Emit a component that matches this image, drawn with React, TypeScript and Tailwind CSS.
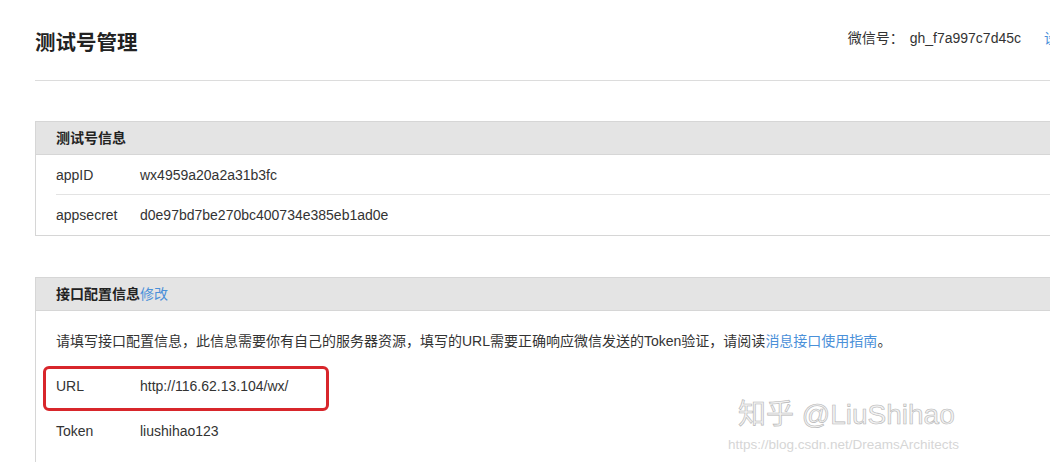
import React from "react";

const font = { fontFamily: '"Liberation Sans", "Noto Sans CJK SC", sans-serif' };

function Row({ label, value, divider }: { label: string; value: string; divider?: boolean }) {
  return (
    <div className="h-[40px] pl-[20px]">
      <div className={`h-full flex items-center pt-[1px] ${divider ? "border-b border-[#e3e3e3]" : ""}`}>
        <div className="w-[84px] shrink-0">{label}</div>
        <div>{value}</div>
      </div>
    </div>
  );
}

export default function App() {
  return (
    <div
      className="relative w-[1050px] h-[462px] overflow-hidden bg-white text-[14px] text-[#333]"
      style={font}
    >
      <div className="w-[1130px] pl-[35px]">
        {/* Page header */}
        <div className="h-[81px] border-b border-[#dcdcdc] flex justify-between">
          <h1 className="pt-[29px] leading-[28px] text-[20.5px] font-bold text-[#222]">测试号管理</h1>
          <div className="pt-[28px] leading-[20px] flex pr-[58px]">
            <span>微信号：</span>
            <span className="ml-[6px]">gh_f7a997c7d45c</span>
            <span className="ml-[23px] text-[#4a90d9]">设置</span>
          </div>
        </div>

        {/* Panel 1 */}
        <div className="mt-[40px] border border-[#d6d6d6]">
          <div className="h-[33px] bg-[#e4e4e4] border-b border-[#d6d6d6] pl-[20px] flex items-center font-bold text-[#222]">
            测试号信息
          </div>
          <Row label="appID" value="wx4959a20a2a31b3fc" divider />
          <Row label="appsecret" value="d0e97bd7be270bc400734e385eb1ad0e" />
        </div>

        {/* Panel 2 */}
        <div className="mt-[41px] border border-[#d6d6d6] pb-[20px]">
          <div className="h-[33px] bg-[#e4e4e4] border-b border-[#d6d6d6] pl-[20px] flex items-center">
            <span className="font-bold text-[#222]">接口配置信息</span>
            <span className="text-[#4a90d9]">修改</span>
          </div>
          <div className="pt-[8px] pl-[20px]">
            <div className="h-[45px] flex items-center">
              <span>
                请填写接口配置信息，此信息需要你有自己的服务器资源，填写的URL需要正确响应微信发送的Token验证，请阅读
                <span className="text-[#4a90d9]">消息接口使用指南</span>。
              </span>
            </div>
            <div className="h-[45px] flex items-center">
              <div className="w-[84px] shrink-0">URL</div>
              <div>http://116.62.13.104/wx/</div>
            </div>
            <div className="h-[45px] flex items-center">
              <div className="w-[84px] shrink-0">Token</div>
              <div>liushihao123</div>
            </div>
          </div>
        </div>
      </div>

      {/* Red annotation box */}
      <div className="absolute left-[43px] top-[366px] w-[286px] h-[45px] border-[3px] border-[#d8262b] rounded-[6px]" />

      {/* Watermark */}
      <div className="absolute left-[738px] top-[398px] text-[28px] leading-[34px] text-[#f2f2f2] [-webkit-text-stroke:0.6px_#b5b5b5]">
        知乎 @LiuShihao
      </div>
      <div className="absolute left-[728px] top-[436px] text-[13.5px] leading-[18px] text-[#d6d6d6]">
        https://blog.csdn.net/DreamsArchitects
      </div>
    </div>
  );
}
